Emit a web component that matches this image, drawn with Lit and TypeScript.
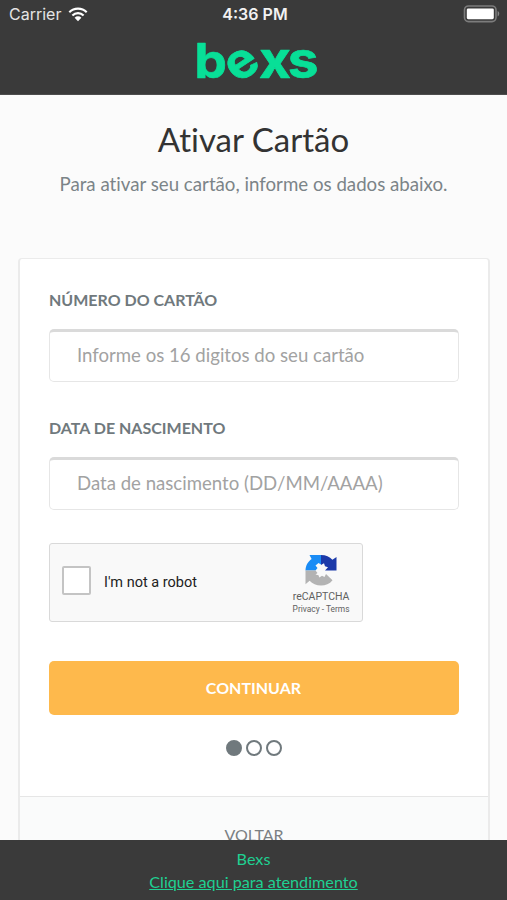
import { LitElement, html, css, svg } from "lit";
import { customElement } from "lit/decorators.js";

const wifi = svg`<svg class="wifi" width="20" height="15" viewBox="0 0 20 15">
  <g fill="none" stroke="#fff" stroke-width="2.2">
    <path d="M1.3 5.2A12.6 12.6 0 0 1 18.7 5.2"/>
    <path d="M4.4 8.5A8 8 0 0 1 15.6 8.5"/>
  </g>
  <path d="M10 14.2 6.6 10.7a4.9 4.9 0 0 1 6.8 0z" fill="#fff"/>
</svg>`;

const battery = svg`<svg class="battery" width="37" height="18" viewBox="0 0 37 18">
  <rect x="1.500" y="1" width="31.500" height="15.6" rx="4" fill="none" stroke="#7c7c7c" stroke-width="1.6"/>
  <rect x="3.8" y="3.4" width="27" height="10.8" rx="1.4" fill="#fff"/>
  <path d="M34.6 6v5.4c2.2-.7 2.2-4.7 0-5.4z" fill="#858585"/>
</svg>`;

const recaptcha = svg`<svg class="mark" width="32" height="33" viewBox="0 0 32 33">
  <path d="M4.500 1H16v9.500l-2.500-1.500-3 2.500 2 2.500-2 2.500H.5C.6 11.500 3 7.600 6.600 5z" fill="#1a8cf5"/>
  <path d="M16 1c5 0 8.600 1.700 11.400 4.800L31.500 3v13.500H20l3-3.200-3-1-1-3-3 1.700z" fill="#1c3aa9"/>
  <path d="M.5 16.500h10L12.500 19l-2 1.500 3 .7.800 2.300 2.700-1.700 2.500 1.200 1.500-3 6.500 6.300C24.600 30 20.500 31.500 16 31.500c-4.600 0-8.600-1.800-11.400-4.800L.5 30.200z" fill="#b3b3b3"/>
</svg>`;

@customElement("app-root")
export class AppRoot extends LitElement {
  static styles = css`
    :host { display: block; height: 900px; overflow: hidden; background: #fbfbfb;
      font-family: Lato, "Liberation Sans", sans-serif; color: #6f787d; font-variant-ligatures: none; }
    * { box-sizing: border-box; }
    .screen { height: 100%; display: flex; flex-direction: column; }
    .top { flex: none; height: 95px; background: #3a3a3a; border-bottom: 1px solid #4d4d4d; }
    .status { height: 28px; display: grid; grid-template-columns: 1fr auto 1fr; align-items: center;
      padding: 0 7px 0 9px; color: #f2f2f2; font: 16px/28px Inter, sans-serif; }
    .carrier { display: flex; align-items: center; gap: 7px; }
    .name { font-size: 16px; color: #e4e4e4; }
    .time { font-weight: 600; font-size: 16px; padding-left: 1px; }
    .battery { justify-self: end; }
    .logo { display: block; margin: 0 auto; overflow: visible; }
    .logo text { font: 700 51px Inter, sans-serif; fill: #08df97; stroke: #08df97; stroke-width: .7; stroke-linejoin: round; }
    .logo .stem { font-size: 47.5px; }
    .logo .tilt { font-size: 48.5px; }
    main { flex: 1; min-height: 0; overflow: hidden; text-align: center; }
    h1 { margin: 24px 0 0; font-size: 33px; line-height: 40px; font-weight: 400; color: #333; }
    .lead { margin: 13px 0 0; font-size: 18.7px; line-height: 24px; color: #7b8488; }
    .card { margin: 62px 17px 0 18px; border: 1px solid #ebebeb; border-width: 1px 2px 0; border-radius: 4px 4px 0 0;
      background: #fff; text-align: left; }
    form { height: 537px; padding: 31px 29px 0; }
    label { display: block; height: 20px; font-size: 16px; line-height: 20px; font-weight: 700; color: #70797d; }
    input { display: block; width: 100%; height: 53px; margin: 19px 0 36px; padding: 0 27px 3px; border: 1px solid #e6e6e6;
      border-top: 3px solid #dadada; border-radius: 5px; background: #fff; font: 18.6px Lato, sans-serif;
      font-variant-ligatures: none; outline: none; }
    input::placeholder { color: #a2a2a2; opacity: 1; }
    .captcha { width: 314px; height: 79px; margin-top: -3px; border: 1px solid #d9d9d9; border-radius: 3px; background: #f9f9f9;
      display: flex; align-items: center; padding: 0 12.5px 0 12px; font-family: Roboto, sans-serif; }
    .box { width: 29px; height: 29px; margin-top: -4px; border: 2px solid #c4c4c4; border-radius: 2px; background: #fff; }
    .robot { margin-left: 13px; font-size: 14.5px; color: #222; }
    .brand { margin-left: auto; display: flex; flex-direction: column; align-items: center; color: #616161; padding-top: 5px; }
    .rc { font-size: 10.5px; line-height: 13px; margin-top: 3px; }
    .terms { font-size: 8.400px; line-height: 13px; }
    button { display: block; width: 100%; height: 54px; margin: 39px 0 25px; padding: 0 1px 2px 0; border: 0; border-radius: 5px;
      background: #feb94c; color: #fff; font: 700 16px Lato, sans-serif; }
    .dots { display: flex; justify-content: center; gap: 4px; }
    .dot { width: 16px; height: 16px; border: 2.4px solid #70797d; border-radius: 50%; }
    .on { background: #70797d; }
    .back { height: 90px; border-top: 1px solid #e6e6e6; background: #fafbfb; text-align: center; padding-top: 28px;
      font-size: 16px; line-height: 20px; color: #7b8083; }
    footer { flex: none; height: 60px; padding-top: 7px; background: #3a3a3a; text-align: center; font-size: 16.2px;
      line-height: 23px; color: #1fd092; }
    .help { display: block; text-decoration: underline; }
  `;

  render() {
    return html`<div class="screen">
      <header class="top">
        <div class="status">
          <div class="carrier"><span class="name">Carrier</span>${wifi}</div>
          <span class="time">4:36 PM</span>${battery}
        </div>
        <svg class="logo" width="124" height="60" viewBox="0 0 124 60">
          <text transform="scale(1.08 1)" x="2.4 42.300 62 88.600" y="50 55.500 50 50" rotate="0 -36 0 0"><tspan class="stem">b</tspan><tspan class="tilt">e</tspan>xs</text>
        </svg>
      </header>
      <main>
        <h1>Ativar Cartão</h1>
        <p class="lead">Para ativar seu cartão, informe os dados abaixo.</p>
        <section class="card">
          <form>
            <label for="number">NÚMERO DO CARTÃO</label>
            <input id="number" placeholder="Informe os 16 digitos do seu cartão">
            <label for="birth">DATA DE NASCIMENTO</label>
            <input id="birth" placeholder="Data de nascimento (DD/MM/AAAA)">
            <div class="captcha">
              <span class="box"></span><span class="robot">I'm not a robot</span>
              <div class="brand">${recaptcha}<span class="rc">reCAPTCHA</span><span class="terms">Privacy - Terms</span></div>
            </div>
            <button type="button">CONTINUAR</button>
            <div class="dots"><i class="dot on"></i><i class="dot"></i><i class="dot"></i></div>
          </form>
          <div class="back">VOLTAR</div>
        </section>
      </main>
      <footer>Bexs<a class="help">Clique aqui para atendimento</a></footer>
    </div>`;
  }
}
